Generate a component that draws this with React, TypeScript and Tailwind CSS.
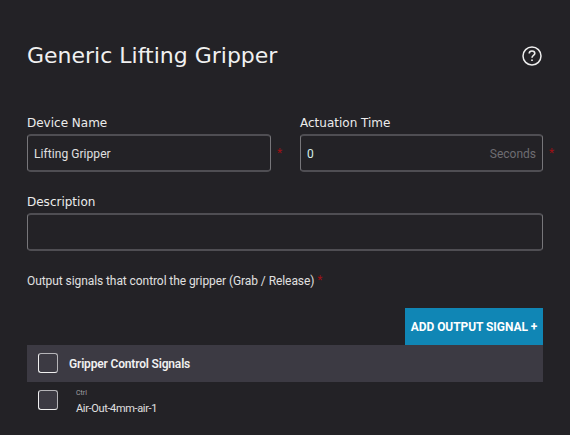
import React from "react";

const display = "font-['DejaVu_Sans',sans-serif]";
const box =
  "flex items-center rounded-[4px] border-x border-y-2 border-x-[#77767a] border-y-[#4f4e53] px-[6px] pt-px";

function Star({ className = "" }: { className?: string }) {
  return <span className={`text-[12px] leading-[16px] text-[#9c1014] ${className}`}>*</span>;
}

function Label({ children }: { children: React.ReactNode }) {
  return <label className={`${display} block h-[21px] pt-px text-[12px] leading-[18px] text-[#ececec]`}>{children}</label>;
}

function Checkbox() {
  return (
    <span
      role="checkbox"
      aria-checked="false"
      className="block size-5 shrink-0 rounded-[3px] border border-t-[#b5b4b8] border-r-[#b5b4b8] border-b-[#f0f0f0] border-l-[#f0f0f0] bg-[#3c3a43]"
    />
  );
}

export default function App() {
  return (
    <main className="h-[435px] w-[570px] overflow-hidden bg-[#232226] pr-[27px] pl-[27px] font-['Roboto',sans-serif] text-[#e0e0e0]">
      <header className="flex h-[113px] items-start justify-between pt-[40px]">
        <h1 className={`${display} pt-px text-[22px] leading-[30px] whitespace-nowrap text-[#f0f0f0]`}>
          Generic Lifting Gripper
        </h1>
        <svg className="mt-[6px] mr-[1px] size-5" viewBox="0 0 20 20" fill="none" stroke="#ededed">
          <circle cx="10" cy="10" r="9" strokeWidth="1.5" />
          <path d="M7.2 7.6C7.2 6 8.4 5 10 5s2.8 1 2.8 2.5c0 1.9-2.8 2-2.8 4.2" strokeWidth="1.6" />
          <path d="M10 13.4v1.7" strokeWidth="1.7" />
        </svg>
      </header>

      <div className="flex gap-[29px]">
        <div className="w-[244px]">
          <Label>Device Name</Label>
          <div className="flex w-[260px]">
            <div className={`${box} h-[38px] w-[244px] shrink-0`}>
              <span className="text-[12px] tracking-[0.06px]">Lifting Gripper</span>
            </div>
            <Star className="mt-[11px] ml-[6px]" />
          </div>
        </div>
        <div className="w-[243px]">
          <Label>Actuation Time</Label>
          <div className="flex w-[260px]">
            <div className={`${box} h-[38px] w-[243px] shrink-0 justify-between`}>
              <span className="text-[12px] text-[#d5efea]">0</span>
              <span className="text-[12px] text-[#6e6d72]">Seconds</span>
            </div>
            <Star className="mt-[11px] ml-[6px]" />
          </div>
        </div>
      </div>

      <div className="mt-[20px]">
        <Label>Description</Label>
        <div className={`${box} h-[38px]`} />
      </div>

      <p className="mt-[20px] flex h-[18px] text-[12px] leading-[18px] whitespace-nowrap">
        <span className="pt-px tracking-[-0.075px]">Output signals that control the gripper (Grab / Release)</span>
        <Star className="ml-[3px] pt-px" />
      </p>

      <div className="mt-[19px] flex justify-end">
        <button className="h-[37px] w-[138px] bg-[#1086b5] pt-px text-[12px] font-bold tracking-[-0.07px] whitespace-nowrap text-white">
          ADD OUTPUT SIGNAL +
        </button>
      </div>

      <div className="flex h-[37px] items-start bg-[#3c3a43] pt-[8px] pl-[11px]">
        <Checkbox />
        <span className="ml-[11px] pt-[2px] text-[12px] leading-[18px] font-semibold tracking-[-0.17px] text-[#f0f0f0]">
          Gripper Control Signals
        </span>
      </div>
      <div className="flex h-[37px] items-start pt-[8px] pl-[11px]">
        <Checkbox />
        <div className="ml-[18px] flex flex-col">
          <span className="-mt-[2px] text-[7px] leading-[10px] text-[#a2a1a5]">Ctrl</span>
          <span className="mt-[4px] text-[11px] leading-[14px] tracking-[-0.35px]">Air-Out-4mm-air-1</span>
        </div>
      </div>
    </main>
  );
}
